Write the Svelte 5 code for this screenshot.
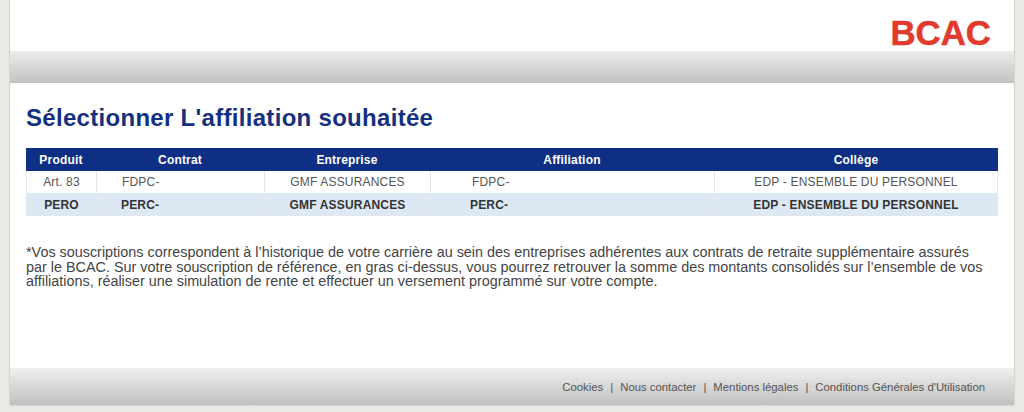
<script>
  const rows = [
    { produit: 'Art. 83', contrat: 'FDPC-', entreprise: 'GMF ASSURANCES', affiliation: 'FDPC-', college: 'EDP - ENSEMBLE DU PERSONNEL', ref: false },
    { produit: 'PERO', contrat: 'PERC-', entreprise: 'GMF ASSURANCES', affiliation: 'PERC-', college: 'EDP - ENSEMBLE DU PERSONNEL', ref: true }
  ];
  const links = ['Cookies', 'Nous contacter', 'Mentions légales', "Conditions Générales d'Utilisation"];
</script>

<div class="page">
  <div class="sheet">
    <header class="top">
      <div class="logo">BCAC</div>
    </header>
    <div class="band"></div>
    <main class="content">
      <h1>Sélectionner L'affiliation souhaitée</h1>
      <table>
        <colgroup>
          <col class="c1" /><col class="c2" /><col class="c3" /><col class="c4" /><col class="c5" />
        </colgroup>
        <thead>
          <tr><th>Produit</th><th>Contrat</th><th>Entreprise</th><th>Affiliation</th><th>Collège</th></tr>
        </thead>
        <tbody>
          {#each rows as r}
            <tr class:ref={r.ref}>
              <td>{r.produit}</td>
              <td class="code">{r.contrat}</td>
              <td>{r.entreprise}</td>
              <td class="code wide">{r.affiliation}</td>
              <td>{r.college}</td>
            </tr>
          {/each}
        </tbody>
      </table>
      <p class="note">*Vos souscriptions correspondent à l’historique de votre carrière au sein des entreprises adhérentes aux contrats de retraite supplémentaire assurés par le BCAC. Sur votre souscription de référence, en gras ci-dessus, vous pourrez retrouver la somme des montants consolidés sur l’ensemble de vos affiliations, réaliser une simulation de rente et effectuer un versement programmé sur votre compte.</p>
    </main>
    <footer class="foot">
      {#each links as l, i}
        {#if i > 0}<span class="sep">|</span>{/if}<span>{l}</span>
      {/each}
    </footer>
  </div>
</div>

<style>
  :global(body) {
    margin: 0;
    background: #e9e9e5;
    font-family: "Liberation Sans", Arial, sans-serif;
  }
  .page {
    height: 412px;
    overflow: hidden;
    padding: 0 10px;
    box-sizing: border-box;
  }
  .sheet {
    height: 405px;
    background: #fff;
    display: flex;
    flex-direction: column;
    box-shadow: 0 0 2px rgba(0, 0, 0, 0.25);
  }
  .top {
    height: 51px;
    display: flex;
    justify-content: flex-end;
    align-items: flex-start;
    padding-right: 23px;
    flex: none;
  }
  .logo {
    color: #e23a2c;
    font-weight: 700;
    font-size: 34.8px;
    line-height: 36px;
    margin-top: 15px;
    -webkit-text-stroke: 0.5px #e23a2c;
    position: relative;
    z-index: 1;
  }
  .band {
    height: 32px;
    flex: none;
    background: linear-gradient(#ececec, #c2c2c2);
  }
  .content {
    flex: 1;
    padding: 0 16px;
  }
  h1 {
    margin: 20px 0 0;
    font-size: 24px;
    letter-spacing: 0.3px;
    line-height: 30px;
    font-weight: 700;
    color: #14307f;
  }
  table {
    margin-top: 15px;
    width: 972px;
    table-layout: fixed;
    border-collapse: separate;
    border-spacing: 0;
    font-size: 12px;
    letter-spacing: 0.18px;
    color: #555;
  }
  .c1 { width: 70px; }
  .c2 { width: 168px; }
  .c3 { width: 166px; }
  .c4 { width: 284px; }
  .c5 { width: 284px; }
  th {
    background: #0f2f84;
    color: #fff;
    height: 23px;
    padding: 0;
    font-weight: 700;
    text-align: center;
  }
  td {
    height: 22px;
    box-sizing: border-box;
    padding: 0;
    text-align: center;
    border-left: 1px solid #e2e6ea;
  }
  td:last-child { border-right: 1px solid #e2e6ea; }
  tbody tr:last-child td {
    height: 23px;
    padding-top: 1px;
    border-bottom: 1px solid #e2e6ea;
  }
  td.code { text-align: left; padding-left: 25px; }
  td.code.wide { padding-left: 41px; }
  tr.ref td.code { padding-left: 24px; }
  tr.ref td.code.wide { padding-left: 39px; }
  tr.ref td {
    background: #dde8f5;
    color: #333;
    font-weight: 700;
  }
  .note {
    margin: 29px 0 0;
    max-width: 962px;
    font-size: 14.38px;
    line-height: 14.5px;
    color: #444;
  }
  .foot {
    height: 37px;
    flex: none;
    box-sizing: border-box;
    background: linear-gradient(#efefef, #c0c0c0);
    display: flex;
    justify-content: flex-end;
    align-items: center;
    gap: 7px;
    padding-right: 29px;
    font-size: 11.33px;
    color: #555;
  }
</style>
